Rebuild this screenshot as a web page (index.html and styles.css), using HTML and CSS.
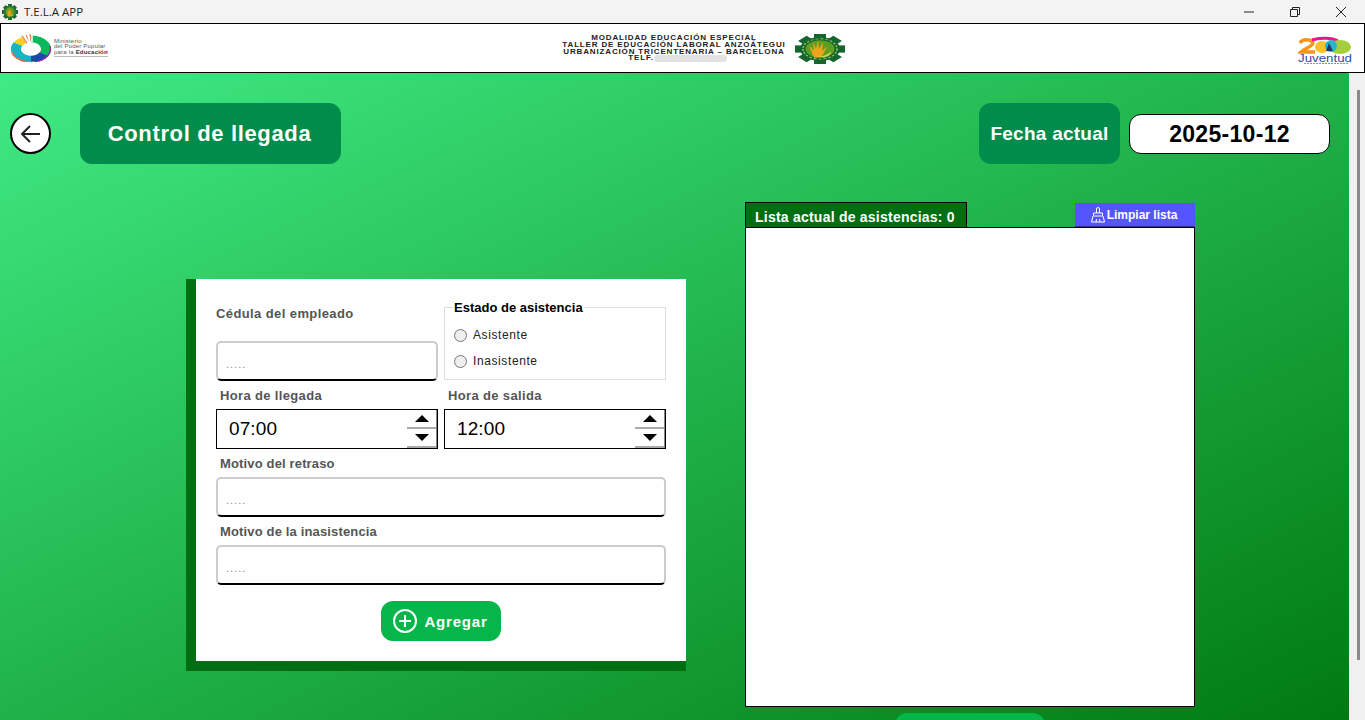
FILE: index.html
```html
<!DOCTYPE html>
<html lang="es">
<head>
  <meta charset="UTF-8" />
  <title>T.E.L.A APP</title>
  <link rel="stylesheet" href="styles.css">
</head>
<body>
  <svg class="defs" width="0" height="0" aria-hidden="true">
    <symbol id="gear" viewBox="0 0 50 50" preserveAspectRatio="none">
      <g fill="#14662c">
        <circle cx="25" cy="25" r="20"/>
        <rect x="19" y="0" width="12" height="50"/>
        <rect x="0" y="19" width="50" height="12"/>
        <rect x="19" y="0" width="12" height="50" transform="rotate(45 25 25)"/>
        <rect x="19" y="0" width="12" height="50" transform="rotate(-45 25 25)"/>
      </g>
      <circle cx="25" cy="25" r="17" fill="none" stroke="#9fc46a" stroke-width="1.500" stroke-dasharray="3 2"/>
      <circle cx="25" cy="25" r="14.500" fill="#5d9e22"/>
      <path d="M14 19l5 9-1-15 3 12 2-15 1 15 4-12-1 15 5-7-4 13-3 5h-6z" fill="#eda51c"/>
      <path d="M24 37c5 0 9-3 12-8 0 5-3 9-8 10z" fill="#c9d94a"/>
    </symbol>
  </svg>

  <div class="titlebar">
    <svg class="title-icon"><use href="#gear"/></svg>
    <span class="title-text">T.E.L.A APP</span>
    <div class="win-controls">
      <svg width="12" height="12" viewBox="0 0 12 12"><path d="M1 6h10" stroke="#222" fill="none"/></svg>
      <svg width="12" height="12" viewBox="0 0 12 12"><path d="M1.500 3.500h7v7h-7zM3.500 3.500v-2h7v7h-2" stroke="#222" fill="none"/></svg>
      <svg width="12" height="12" viewBox="0 0 12 12"><path d="M1 1l10 10M11 1L1 11" stroke="#222" fill="none"/></svg>
    </div>
  </div>

  <header class="banner">
    <div class="logo-left">
      <svg width="40" height="28" viewBox="0 0 40 28">
        <g transform="translate(20 15) scale(1 .67)" fill="none">
          <path d="M0-15A15 15 0 0 1 13 7.500" stroke="#0bb85a" stroke-width="10"/>
          <path d="M13 7.500A15 15 0 0 1 0 15" stroke="#1a4aa8" stroke-width="10"/>
          <path d="M0 15A15 15 0 0 1-13-7.500" stroke="#16b5c4" stroke-width="10"/>
          <path d="M-13-7.500A15 15 0 0 1-7-13" stroke="#f5d21c" stroke-width="10"/>
          <path d="M19-4A19.500 19.500 0 0 1 8 18" stroke="#a5249a" stroke-width="1.500"/>
          <path d="M4 19A19.500 19.500 0 0 1-19 5" stroke="#f2693c" stroke-width="2"/>
        </g>
        <g fill="none" stroke-width="1.500">
          <path d="M11 2l5 7M15 1l3 7M19 0l1 8" stroke="#f58a5c"/>
          <path d="M13 1l5 8M17 0l2 8M21 0v8" stroke="#fff"/>
        </g>
      </svg>
      <div class="ministry">
        <span>Ministerio</span>
        <span>del Poder Popular</span>
        <span>para la <b>Educación</b></span>
      </div>
    </div>

    <div class="school">
      <div class="school-text">
        <span>MODALIDAD EDUCACIÓN ESPECIAL</span>
        <span>TALLER DE EDUCACIÓN LABORAL ANZOÁTEGUI</span>
        <span>URBANIZACIÓN TRICENTENARIA – BARCELONA</span>
        <span class="tel">TELF.<i class="blur"></i></span>
      </div>
      <svg class="school-gear"><use href="#gear"/></svg>
    </div>

    <svg class="logo-right" width="56" height="30" viewBox="0 0 56 30">
      <path d="M2 8a7 5 0 0 1 13 0c0 3-7 5-12 9h14" fill="none" stroke="#f7941d" stroke-width="3.500"/>
      <path d="M14 5a17 6 0 0 1 26 1" fill="none" stroke="#e6168c" stroke-width="3"/>
      <ellipse cx="42" cy="12" rx="11" ry="7" fill="#a5cf3a"/>
      <ellipse cx="24" cy="12" rx="7" ry="6" fill="#fbc02d"/>
      <ellipse cx="33" cy="11" rx="6" ry="6" fill="#2bb5c9"/>
      <path d="M31 8l-3 8h7z" fill="#1b3a6b"/>
      <text x="0" y="26.500" class="juventud" textLength="54" lengthAdjust="spacingAndGlyphs">Juventud</text>
      <path d="M6 28.500h44" stroke="#8a8fb0" stroke-dasharray="2 1"/>
    </svg>
  </header>

  <div class="workspace">
    <main class="content">
      <div class="top-row">
        <button class="back" aria-label="Volver">
          <svg width="22" height="20" viewBox="0 0 22 20"><path d="M20 10H2M10 2l-8 8 8 8" fill="none" stroke="#222" stroke-width="2"/></svg>
        </button>
        <h1 class="page-title">Control de llegada</h1>
        <div class="date-label">Fecha actual</div>
        <div class="date-value">2025-10-12</div>
      </div>

      <div class="columns">
        <form class="panel">
          <div class="field-pair first">
            <div class="cedula">
              <label class="cedula-label" for="cedula">Cédula del empleado</label>
              <input class="text-input" id="cedula" placeholder=".....">
            </div>
            <fieldset class="status">
              <legend>Estado de asistencia</legend>
              <label class="radio"><input type="radio" name="estado"> Asistente</label>
              <label class="radio"><input type="radio" name="estado"> Inasistente</label>
            </fieldset>
          </div>

          <div class="field-pair">
            <div>
              <label class="field-label">Hora de llegada</label>
              <div class="time-input">
                <span>07:00</span>
                <div class="spin"><i class="up"></i><i class="down"></i></div>
              </div>
            </div>
            <div>
              <label class="field-label">Hora de salida</label>
              <div class="time-input">
                <span>12:00</span>
                <div class="spin"><i class="up"></i><i class="down"></i></div>
              </div>
            </div>
          </div>

          <label class="field-label tight" for="retraso">Motivo del retraso</label>
          <input class="text-input" id="retraso" placeholder=".....">

          <label class="field-label tight" for="inasistencia">Motivo de la inasistencia</label>
          <input class="text-input" id="inasistencia" placeholder=".....">

          <button type="button" class="add-btn">
            <svg width="24" height="24" viewBox="0 0 24 24"><circle cx="12" cy="12" r="11" fill="none" stroke="#fff" stroke-width="2"/><path d="M12 6v12M6 12h12" stroke="#fff" stroke-width="2"/></svg>
            Agregar
          </button>
        </form>

        <section class="list-col">
          <div class="list-head">
            <div class="list-tab">Lista actual de asistencias: 0</div>
            <button class="clear-btn">
              <svg width="14" height="16" viewBox="0 0 14 16"><path d="M5.500 6V2a1.500 1.500 0 0 1 3 0v4M2.500 6h9v3h-9zM2 9l-1.500 6h13L12 9M5 15l.5-3M9 15l-.5-3" fill="none" stroke="#fff"/></svg>
              Limpiar lista
            </button>
          </div>
          <div class="list-box"></div>
          <button class="save-btn" aria-label="Guardar"></button>
        </section>
      </div>
    </main>
    <div class="scrollbar"><div class="thumb"></div></div>
  </div>
</body>
</html>
```

FILE: styles.css
```css
* {
  box-sizing: border-box;
}
html, body {
  margin: 0;
  height: 720px;
  overflow: hidden;
}
body {
  font-family: 'Liberation Sans', Arial, sans-serif;
  display: flex;
  flex-direction: column;
  background: #f0f0f0;
}
button {
  font-family: inherit;
  border: none;
  padding: 0;
}
.defs {
  position: absolute;
}

/* window bar */
.titlebar {
  height: 23px;
  flex: none;
  background: #f3f3f3;
  display: flex;
  align-items: center;
  padding-left: 2px;
}
.title-icon {
  width: 16px;
  height: 16px;
  margin-right: 6px;
}
.title-text {
  font-family: 'Open Sans', sans-serif;
  font-size: 11.500px;
  color: #222;
}
.win-controls {
  margin-left: auto;
  display: flex;
  gap: 34px;
  padding-right: 18px;
}

/* banner */
.banner {
  height: 50px;
  flex: none;
  background: #fff;
  border: 1px solid #000;
  display: flex;
  justify-content: space-between;
  align-items: center;
  padding: 0 10px;
}
.logo-left {
  display: flex;
  align-items: center;
  gap: 3px;
  width: 98px;
}
.logo-left svg {
  flex: none;
}
.ministry {
  font-size: 6px;
  line-height: 5.500px;
  color: #555;
  white-space: nowrap;
  border-bottom: 1px solid #bbb;
  padding-bottom: 1px;
  letter-spacing: 0.2px;
}
.ministry span {
  display: block;
}
.ministry b {
  color: #333;
}
.school {
  display: flex;
  align-items: center;
  gap: 9px;
  padding-top: 1px;
}
.school-text {
  font-size: 8px;
  font-weight: bold;
  line-height: 6.700px;
  letter-spacing: 0.85px;
  text-align: center;
  color: #222;
  white-space: nowrap;
}
.school-text span {
  display: block;
}
.school-text .tel {
  text-align: left;
  padding-left: 66px;
  display: flex;
  align-items: center;
}
.blur {
  display: inline-block;
  width: 73px;
  height: 7px;
  border-radius: 4px;
  background: #e2e2e2;
  margin-top: -1px;
}
.school-gear {
  width: 50px;
  height: 30px;
  flex: none;
}
.logo-right {
  margin-top: 3px;
}
.juventud {
  font-size: 10px;
  fill: #3a4a9c;
}

/* main area */
.workspace {
  flex: 1;
  display: flex;
  min-height: 0;
}
.content {
  flex: 1;
  overflow: hidden;
  background: linear-gradient(to bottom right, #40ea84, #007a10);
  padding: 30px 19px 0 10px;
}
.scrollbar {
  width: 16px;
  flex: none;
  background: #f0f0f0;
  padding: 17px 0 0 8px;
}
.thumb {
  width: 3px;
  height: 570px;
  background: #8a8a8a;
}
.top-row {
  display: flex;
  align-items: center;
}
.back {
  width: 41px;
  height: 41px;
  border-radius: 50%;
  background: #fff;
  border: 2px solid #000;
  margin-right: 29px;
  display: flex;
  align-items: center;
  justify-content: center;
}
.page-title {
  margin: 0;
  width: 261px;
  height: 61px;
  padding-right: 2px;
  background: #008c4a;
  border-radius: 12px;
  color: #fff;
  font-size: 22px;
  font-weight: bold;
  letter-spacing: 0.65px;
  line-height: 61px;
  text-align: center;
}
.date-label {
  margin-left: auto;
  width: 141px;
  height: 61px;
  background: #008c4a;
  border-radius: 12px;
  color: #fff;
  font-size: 19px;
  font-weight: bold;
  letter-spacing: 0.25px;
  line-height: 61px;
  text-align: center;
}
.date-value {
  margin-left: 9px;
  width: 201px;
  height: 40px;
  background: #fff;
  border: 1px solid #000;
  border-radius: 12px;
  font-size: 23px;
  font-weight: bold;
  letter-spacing: 0.3px;
  line-height: 38px;
  text-align: center;
  color: #000;
}

.columns {
  display: flex;
  align-items: flex-start;
  padding-left: 176px;
  gap: 59px;
}

/* form */
.panel {
  margin-top: 115px;
  width: 500px;
  background: #fff;
  border-left: 10px solid #006e12;
  border-bottom: 10px solid #006e12;
  padding: 21px 20px 20px;
  display: flex;
  flex-direction: column;
}
.field-pair {
  display: grid;
  grid-template-columns: 222px 222px;
  gap: 6px;
}
.field-pair.first {
  height: 81px;
}
.cedula {
  display: flex;
  flex-direction: column;
  justify-content: space-between;
}
.cedula-label {
  margin-top: 6px;
  font-size: 13px;
  line-height: 16px;
  font-weight: bold;
  letter-spacing: 0.4px;
  color: #555;
}
.field-label {
  display: block;
  margin: 7px 0 5px 4px;
  font-size: 13px;
  line-height: 16px;
  font-weight: bold;
  letter-spacing: 0.35px;
  color: #555;
}
.field-label.tight {
  letter-spacing: 0.15px;
}
.text-input {
  width: 100%;
  height: 40px;
  border: 2px solid #ccc;
  border-bottom-color: #000;
  border-radius: 5px;
  padding: 6px 8px 0;
  font-family: inherit;
  font-size: 11px;
  letter-spacing: 1px;
  outline: none;
}
.text-input::placeholder {
  color: #888;
}
.status {
  margin: -1px 0 0;
  padding: 7px 9px 0;
  height: 81px;
  border: 1px solid #ddd;
  min-width: 0;
}
.status legend {
  padding: 2px 1px 0 0;
  font-size: 13px;
  line-height: 14px;
  font-weight: bold;
  color: #000;
}
.radio {
  display: flex;
  align-items: center;
  gap: 6px;
  height: 26px;
  font-size: 12px;
  letter-spacing: 0.6px;
  color: #222;
}
.radio input {
  appearance: none;
  margin: 0;
  width: 13px;
  height: 13px;
  border-radius: 50%;
  border: 1px solid #777;
  background: #eee;
}
.time-input {
  height: 40px;
  border: 1px solid #000;
  background: #fff;
  display: flex;
  align-items: center;
  justify-content: space-between;
  padding-left: 12px;
  font-size: 19px;
  letter-spacing: 0.1px;
  line-height: 40px;
  color: #000;
}
.spin {
  width: 30px;
  height: 38px;
  display: flex;
  flex-direction: column;
  border-right: 1px solid #888;
}
.spin i {
  flex: 1;
  display: flex;
  align-items: center;
  justify-content: center;
  border-bottom: 2px solid #aaa;
}
.spin i::after {
  content: "";
  border-left: 7px solid transparent;
  border-right: 7px solid transparent;
}
.spin .up::after {
  border-bottom: 7px solid #000;
}
.spin .down::after {
  border-top: 7px solid #000;
}
.add-btn {
  align-self: center;
  margin-top: 16px;
  width: 120px;
  height: 40px;
  padding-right: 1px;
  border-radius: 12px;
  background: #06b64a;
  color: #fff;
  font-size: 15px;
  font-weight: bold;
  letter-spacing: 0.8px;
  display: flex;
  align-items: center;
  justify-content: center;
  gap: 7px;
}

/* attendance list */
.list-col {
  margin-top: 38px;
  width: 450px;
  display: flex;
  flex-direction: column;
}
.list-head {
  display: flex;
  justify-content: space-between;
  align-items: flex-end;
  margin-bottom: -1px;
}
.list-tab {
  width: 222px;
  height: 26px;
  background: #006e12;
  border: 1px solid #000;
  color: #fff;
  font-size: 14px;
  font-weight: bold;
  letter-spacing: 0.23px;
  line-height: 28px;
  padding-left: 9px;
  white-space: nowrap;
}
.clear-btn {
  width: 120px;
  height: 25px;
  padding-right: 2px;
  background: #5555ff;
  border-bottom: 2px solid #33338f;
  color: #fff;
  font-size: 12px;
  font-weight: bold;
  display: flex;
  align-items: center;
  justify-content: center;
  gap: 2px;
}
.list-box {
  height: 480px;
  flex: none;
  background: #fff;
  border: 1px solid #000;
}
.save-btn {
  align-self: center;
  flex: none;
  margin-top: 6px;
  width: 150px;
  height: 40px;
  border-radius: 12px;
  background: #06b64a;
}
```
